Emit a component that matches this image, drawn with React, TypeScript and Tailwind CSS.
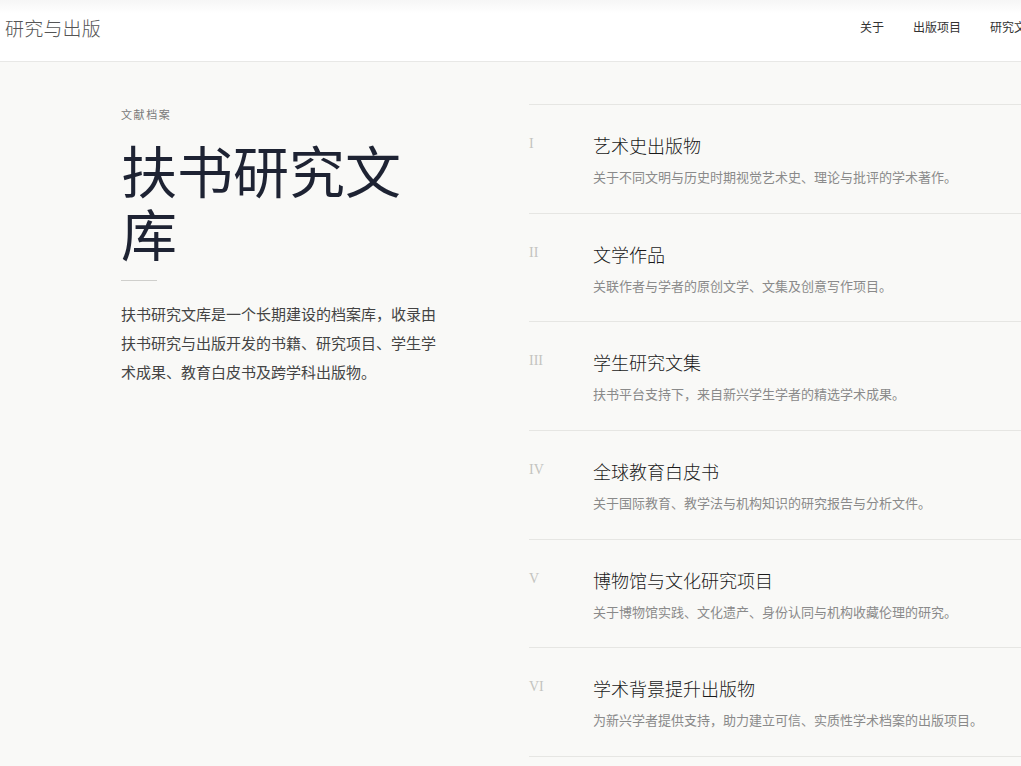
import React from "react";

const SANS = '"Noto Sans CJK SC", "Noto Sans", sans-serif';
const SERIF = '"Liberation Serif", "Noto Sans CJK SC", serif';

type Series = { numeral: string; title: string; desc: string };

const SERIES: Series[] = [
  { numeral: "I", title: "艺术史出版物", desc: "关于不同文明与历史时期视觉艺术史、理论与批评的学术著作。" },
  { numeral: "II", title: "文学作品", desc: "关联作者与学者的原创文学、文集及创意写作项目。" },
  { numeral: "III", title: "学生研究文集", desc: "扶书平台支持下，来自新兴学生学者的精选学术成果。" },
  { numeral: "IV", title: "全球教育白皮书", desc: "关于国际教育、教学法与机构知识的研究报告与分析文件。" },
  { numeral: "V", title: "博物馆与文化研究项目", desc: "关于博物馆实践、文化遗产、身份认同与机构收藏伦理的研究。" },
  { numeral: "VI", title: "学术背景提升出版物", desc: "为新兴学者提供支持，助力建立可信、实质性学术档案的出版项目。" },
];

function Header() {
  return (
    <header className="h-[62px] border-b border-[#e8e8e6] bg-gradient-to-b from-[#f6f6f6] via-white via-[22%] to-white">
      <div className="flex h-full items-center justify-between pl-[5px] pr-[72px] pb-[7px]">
        <div className="text-[19px] leading-none tracking-[0.2px] font-light text-[#555]" style={{ fontFamily: SANS }}>
          研究与出版
        </div>
        <nav className="flex items-center gap-[29px] text-[12px] text-[#333]" style={{ fontFamily: SANS }}>
          <a>关于</a>
          <a>出版项目</a>
          <a>研究文库</a>
        </nav>
      </div>
    </header>
  );
}

function Intro() {
  return (
    <section className="w-[320px] shrink-0 pt-[5px]">
      <div className="text-[11px] leading-none tracking-[1.6px] text-[#7a7a7a]" style={{ fontFamily: SANS }}>
        文献档案
      </div>
      <h1
        className="mt-[17px] text-[56px] leading-[63px] font-normal text-[#1e2333]"
        style={{ fontFamily: SANS }}
      >
        扶书研究文库
      </h1>
      <div className="mt-[17px] h-px w-[36px] bg-[#cfcfcc]" />
      <p className="mt-[18px] text-[15px] leading-[29px] text-[#444]" style={{ fontFamily: SANS }}>
        扶书研究文库是一个长期建设的档案库，收录由扶书研究与出版开发的书籍、研究项目、学生学术成果、教育白皮书及跨学科出版物。
      </p>
    </section>
  );
}

function SeriesRow({ item }: { item: Series }) {
  return (
    <li className="flex border-t border-[#e6e6e3] pt-[28px] pb-[25.7px]">
      <div
        className="w-[64px] shrink-0 pt-[1px] text-[14px] leading-[20px] text-[#c4c4c0]"
        style={{ fontFamily: SERIF }}
      >
        {item.numeral}
      </div>
      <div>
        <h2 className="text-[18px] leading-[24px] font-light text-[#1a1a1a]" style={{ fontFamily: SANS }}>
          {item.title}
        </h2>
        <p className="mt-[10px] text-[13px] leading-[20px] text-[#8a8a8a]" style={{ fontFamily: SANS }}>
          {item.desc}
        </p>
      </div>
    </li>
  );
}

export default function App() {
  return (
    <div className="min-h-screen w-full overflow-hidden bg-[#f9f9f7]">
      <div className="w-[1110px]">
        <Header />
        <main className="flex pl-[121px] pt-[42px]">
          <Intro />
          <ul className="ml-[88px] flex-1 border-b border-[#e6e6e3]">
            {SERIES.map((s) => (
              <SeriesRow key={s.numeral} item={s} />
            ))}
          </ul>
        </main>
      </div>
    </div>
  );
}
